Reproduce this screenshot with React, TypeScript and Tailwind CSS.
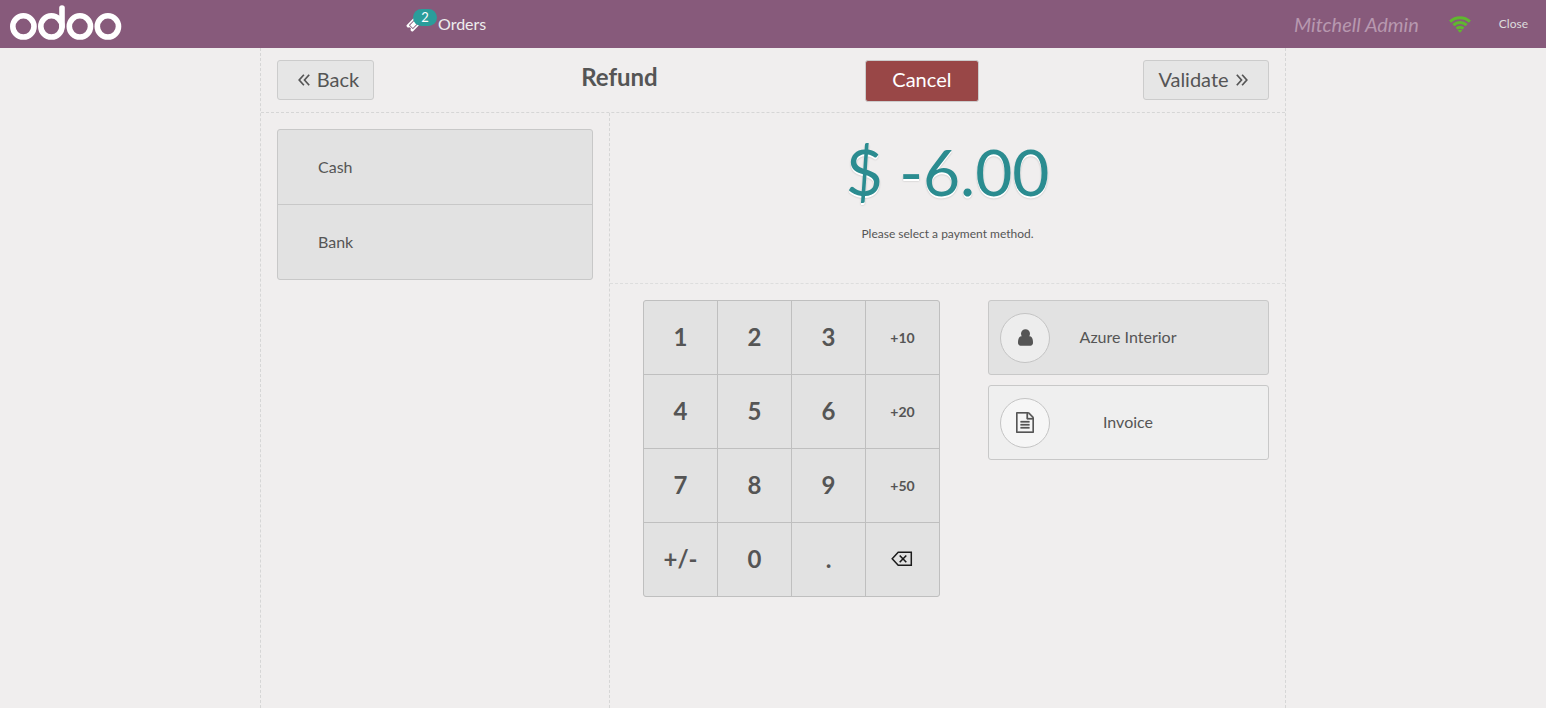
import { useState } from "react";

type IconProps = { className?: string };

function OdooLogo({ className }: IconProps) {
  return (
    <svg viewBox="0 0 112 36" className={className} fill="none" stroke="#fff" strokeWidth="5.6" role="img" aria-label="odoo">
      <circle cx="13.4" cy="21.4" r="10.6" />
      <circle cx="41.4" cy="21.4" r="10.6" />
      <circle cx="69.9" cy="21.4" r="10.6" />
      <circle cx="97.9" cy="21.4" r="10.6" />
      <path d="M52 21.4V3" strokeLinecap="round" />
    </svg>
  );
}

function TicketIcon({ className }: IconProps) {
  return (
    <svg viewBox="0 0 1792 1792" className={className} fill="#fff" aria-hidden="true">
      <path d="M1024 452l316 316-572 572-316-316zm-211 979l618-618q19-19 19-45t-19-45l-362-362q-18-18-45-18t-45 18l-618 618q-19 19-19 45t19 45l362 362q18 18 45 18t45-18zm889-637l-907 908q-37 37-90.500 37t-90.500-37l-126-126q56-56 56-136t-56-136-136-56-136 56l-125-126q-37-37-37-90.500t37-90.500l907-906q37-37 90.500-37t90.500 37l125 125q-56 56-56 136t56 136 136 56 136-56l126 125q37 37 37 90.500t-37 90.500z" />
    </svg>
  );
}

function WifiIcon({ className }: IconProps) {
  return (
    <svg viewBox="0 0 22 17" className={className} fill="none" stroke="#5fb82e" strokeWidth="3" aria-hidden="true">
      <path d="M1.100 5.600C6.700 0.400 15.300 0.400 20.900 5.600" />
      <path d="M4.400 9.200C8.200 5.700 13.800 5.700 17.600 9.200" />
      <path d="M7.600 12.600C9.500 10.900 12.500 10.900 14.400 12.600" />
      <path d="M11 16.800L8.700 14.500C10 13.400 12 13.400 13.300 14.500Z" fill="#5fb82e" stroke="none" />
    </svg>
  );
}

function AnglesLeft({ className }: IconProps) {
  return (
    <svg viewBox="0 0 12 12" className={className} fill="none" stroke="currentColor" strokeWidth="1.700" aria-hidden="true">
      <path d="M5.900 0.800L1.200 6L5.900 11.200M11.200 0.800L6.500 6L11.200 11.200" />
    </svg>
  );
}

function AnglesRight({ className }: IconProps) {
  return (
    <svg viewBox="0 0 12 12" className={className} fill="none" stroke="currentColor" strokeWidth="1.700" aria-hidden="true">
      <path d="M0.800 0.800L5.500 6L0.800 11.200M6.100 0.800L10.800 6L6.100 11.200" />
    </svg>
  );
}

function UserIcon({ className }: IconProps) {
  return (
    <svg viewBox="0 128 1280 1408" className={className} fill="currentColor" aria-hidden="true">
      <path d="M1280 1271q0 109-62.500 187t-150.500 78H213q-88 0-150.500-78T0 1271q0-85 8.500-160.500t31.500-152 58.500-131 94-89T327 704q131 128 313 128t313-128q76 0 134.500 34.500t94 89 58.500 131 31.500 152 8.500 160.500zM1024 512q0 159-112.500 271.500T640 896 368.500 783.500 256 512t112.500-271.500T640 128t271.500 112.500T1024 512z" />
    </svg>
  );
}

function FileIcon({ className }: IconProps) {
  return (
    <svg viewBox="0 0 1536 1792" className={className} fill="currentColor" stroke="currentColor" strokeWidth="24" aria-hidden="true">
      <path d="M1468 380q28 28 48 76t20 88v1152q0 40-28 68t-68 28H96q-40 0-68-28t-28-68V96q0-40 28-68T96 0h896q40 0 88 20t76 48zm-444-244v376h376q-10-29-22-41l-313-313q-12-12-41-22zm384 1528V640H992q-40 0-68-28t-28-68V128H128v1536h1280zM384 800q0-14 9-23t23-9h704q14 0 23 9t9 23v64q0 14-9 23t-23 9H416q-14 0-23-9t-9-23v-64zm736 224q14 0 23 9t9 23v64q0 14-9 23t-23 9H416q-14 0-23-9t-9-23v-64q0-14 9-23t23-9h704zm0 256q14 0 23 9t9 23v64q0 14-9 23t-23 9H416q-14 0-23-9t-9-23v-64q0-14 9-23t23-9h704z" />
    </svg>
  );
}

function BackspaceIcon({ className }: IconProps) {
  return (
    <svg viewBox="0 0 22 16" className={className} fill="none" stroke="#1c1c1c" aria-hidden="true">
      <path d="M7.200 1.200H20.300V14.300H7.200L1.200 7.750Z" strokeWidth="1.500" />
      <path d="M8.700 4.500L15.300 11.200M15.300 4.500L8.700 11.200" strokeWidth="1.600" />
    </svg>
  );
}

const keys = ["1", "2", "3", "+10", "4", "5", "6", "+20", "7", "8", "9", "+50", "+/-", "0", ".", "del"];
const methods = ["Cash", "Bank"];

export default function App() {
  const [, setPressed] = useState("");

  return (
    <div className="flex min-h-screen flex-col bg-[#f0eeee] font-['Lato',sans-serif] text-[#555555]">
      <header className="flex h-12 items-center bg-[#875a7b] text-white">
        <div className="w-[406px] shrink-0 pl-[10px]">
          <OdooLogo className="mb-[2px] h-9 w-28" />
        </div>
        <button type="button" className="relative flex h-12 items-center gap-4 text-base text-[#eeeeee]">
          <TicketIcon className="h-4 w-4" />
          <span className="absolute top-[9px] left-[7px] flex h-[17px] w-6 items-center justify-center rounded-full bg-[#2a9d9b] text-[13px] text-white">
            2
          </span>
          <span>Orders</span>
        </button>
        <div className="ml-auto flex items-center pr-[18px]">
          <span className="text-xl text-[#b798af] italic">Mitchell Admin</span>
          <WifiIcon className="ml-[30px] h-[17px] w-[22px]" />
          <button type="button" className="ml-7 text-xs text-[#dddddd]">
            Close
          </button>
        </div>
      </header>

      <main className="mx-auto flex w-full max-w-[1026px] flex-1 flex-col border-x border-dashed border-[#d6d6d6]">
        <div className="flex h-[65px] items-start border-b border-dashed border-[#d6d6d6] px-4 pt-3 text-xl">
          <button type="button" className="flex h-10 w-[97px] items-center justify-center gap-[7px] rounded-[3px] border border-[#cccccc] bg-[#e6e6e6] pb-[2px] pl-[6px]">
            <AnglesLeft className="mt-[2px] h-3 w-3" />
            Back
          </button>
          <div className="flex-[207]" />
          <h1 className="text-2xl leading-[34px] font-bold">Refund</h1>
          <div className="flex-[207]" />
          <button type="button" className="h-[42px] w-[114px] rounded-[3px] border border-[#cccccc] bg-[#994747] pb-[4px] text-white">
            Cancel
          </button>
          <div className="flex-[164]" />
          <button type="button" className="flex h-10 w-[126px] items-center justify-center gap-[7px] rounded-[3px] border border-[#cccccc] bg-[#e6e6e6] pr-[6px] pb-[2px]">
            Validate
            <AnglesRight className="mt-[2px] h-3 w-3" />
          </button>
        </div>

        <div className="flex flex-1">
          <section className="w-[349px] shrink-0 border-r border-dashed border-[#d6d6d6] p-4">
            <div className="flex flex-col divide-y divide-[#c8c8c8] overflow-hidden rounded-[3px] border border-[#c8c8c8] bg-[#e2e2e2]">
              {methods.map((m) => (
                <button key={m} type="button" className="h-[75px] pl-10 text-left text-base last:h-[74px]">
                  {m}
                </button>
              ))}
            </div>
          </section>

          <section className="flex flex-1 flex-col">
            <div className="flex h-[171px] flex-col items-center border-b border-dashed border-[#dddddd] pt-[23px]">
              <div className="text-[64px] leading-[72px] text-[#2b8c90] [text-shadow:0px_2px_white,0px_2px_2px_rgba(0,0,0,0.27)]">$ -6.00</div>
              <p className="mt-4 text-xs leading-5">Please select a payment method.</p>
            </div>
            <div className="flex items-start justify-between gap-12 py-4 pr-4 pl-[33px]">
              <div className="grid shrink-0 grid-cols-[repeat(4,73px)] gap-px overflow-hidden rounded-[3px] border border-[#bfbfbf] bg-[#bfbfbf]">
                {keys.map((k) => (
                  <button
                    key={k}
                    type="button"
                    aria-label={k === "del" ? "Backspace" : undefined}
                    onClick={() => setPressed(k)}
                    className={`flex h-[73px] items-center justify-center bg-[#e2e2e2] font-bold ${/^\+\d/.test(k) ? "text-sm" : "pb-[2px] text-2xl"}`}
                  >
                    {k === "del" ? <BackspaceIcon className="mr-[2px] h-4 w-[22px]" /> : k}
                  </button>
                ))}
              </div>
              <div className="flex flex-1 flex-col gap-[10px] text-base">
                <button type="button" className="flex h-[75px] items-center rounded-[3px] border border-[#c8c8c8] bg-[#e2e2e2] pl-[11px]">
                  <span className="flex h-[50px] w-[50px] items-center justify-center rounded-full border border-[#c4c4c4] bg-[#ededed]">
                    <UserIcon className="h-[17px] w-[15px]" />
                  </span>
                  <span className="flex-1 pr-[62px] pb-[2px]">Azure Interior</span>
                </button>
                <button type="button" className="flex h-[75px] items-center rounded-[3px] border border-[#c8c8c8] bg-[#efefef] pl-[11px]">
                  <span className="flex h-[50px] w-[50px] items-center justify-center rounded-full border border-[#c4c4c4] bg-[#f6f6f6]">
                    <FileIcon className="h-[21px] w-[18px]" />
                  </span>
                  <span className="flex-1 pr-[62px] pb-[2px]">Invoice</span>
                </button>
              </div>
            </div>
          </section>
        </div>
      </main>
    </div>
  );
}
